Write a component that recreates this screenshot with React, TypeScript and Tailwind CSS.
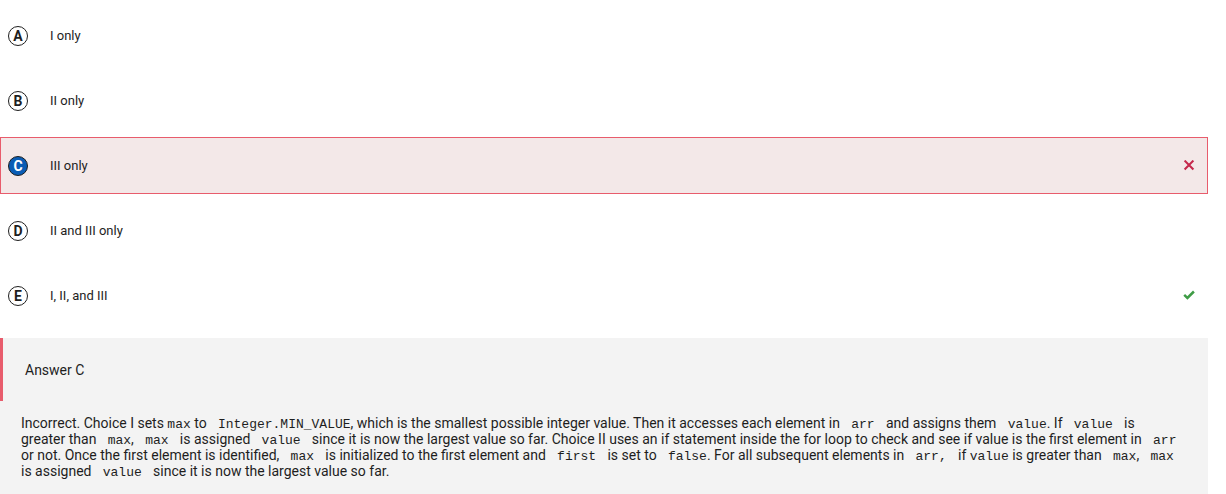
import type { ReactNode } from "react";

type Choice = { letter: string; text: string; mark?: "wrong" | "right" };

const choices: Choice[] = [
  { letter: "A", text: "I only" },
  { letter: "B", text: "II only" },
  { letter: "C", text: "III only", mark: "wrong" },
  { letter: "D", text: "II and III only" },
  { letter: "E", text: "I, II, and III", mark: "right" },
];

function Cross() {
  return (
    <svg role="img" aria-label="Incorrect" viewBox="0 0 12 12" className="size-3">
      <path d="M1.6 .6 10.4 9.4M10.4 .6 1.6 9.4" stroke="#c5284c" strokeWidth="2.1" fill="none" />
    </svg>
  );
}

function Check() {
  return (
    <svg role="img" aria-label="Correct" viewBox="0 0 12 12" className="size-3">
      <path d="M1.2 4.9 4.4 7.9 10.9 1.5" stroke="#3f9c46" strokeWidth="2.5" fill="none" />
    </svg>
  );
}

function ChoiceRow({ letter, text, mark }: Choice) {
  const chosen = mark === "wrong";
  return (
    <label
      className={`flex h-[57px] items-center border pl-[7px] pr-3 ${
        chosen ? "border-[#e85c6c] bg-[#f3e8e8]" : "border-transparent"
      }`}
    >
      <input
        type="radio"
        name="answer"
        value={letter}
        defaultChecked={chosen}
        className="peer size-0 appearance-none"
      />
      <span
        aria-hidden="true"
        className="flex size-5 shrink-0 items-center justify-center rounded-full border border-[#1e1e1e] bg-white text-sm font-bold leading-none text-[#1e1e1e] peer-checked:bg-[#0a5cb4] peer-checked:text-white"
      >
        {letter}
      </span>
      <span className="ml-[22px] flex-1 text-[13px] leading-4">{text}</span>
      {mark === "wrong" && <Cross />}
      {mark === "right" && <Check />}
    </label>
  );
}

function Code({ children }: { children: ReactNode }) {
  return <code className="font-['Liberation_Mono','Courier_New',monospace] text-[13px] leading-none">{children}</code>;
}

export default function App() {
  return (
    <main className="mr-[18px] pt-[7px] font-[Roboto,sans-serif] text-[#1e1e1e]">
      <fieldset aria-label="Answer choices" className="flex flex-col gap-2">
        {choices.map((choice) => (
          <ChoiceRow key={choice.letter} {...choice} />
        ))}
      </fieldset>
      <section className="mt-[14px] bg-[#f3f3f3] pb-4">
        <h2 className="flex h-[63px] items-center border-l-[3px] border-[#e85c6c] pl-[22px] text-sm">Answer C</h2>
        <p className="pl-[21px] pr-[30px] pt-[14px] text-sm leading-4">
          Incorrect. Choice I sets <Code>max</Code> to <Code>&nbsp;Integer.MIN_VALUE</Code>, which is the smallest
          possible integer value. Then it accesses each element in <Code>&nbsp;arr&nbsp;</Code> and assigns them{" "}
          <Code>&nbsp;value</Code>. If <Code>&nbsp;value&nbsp;</Code> is greater than <Code>&nbsp;max</Code>,{" "}
          <Code>&nbsp;max&nbsp;</Code> is assigned <Code>&nbsp;value&nbsp;</Code> since it is now the largest value so
          far. Choice II uses an if statement inside the for loop to check and see if value is the first element in{" "}
          <Code>&nbsp;arr</Code> or not. Once the first element is identified, <Code>&nbsp;max&nbsp;</Code> is
          initialized to the first element and <Code>&nbsp;first&nbsp;</Code> is set to <Code>&nbsp;false</Code>. For
          all subsequent elements in <Code>&nbsp;arr,&nbsp;</Code> if <Code>value</Code> is greater than{" "}
          <Code>&nbsp;max</Code>, <Code>&nbsp;max</Code> is assigned <Code>&nbsp;value&nbsp;</Code> since it is now the
          largest value so far.
        </p>
      </section>
    </main>
  );
}
